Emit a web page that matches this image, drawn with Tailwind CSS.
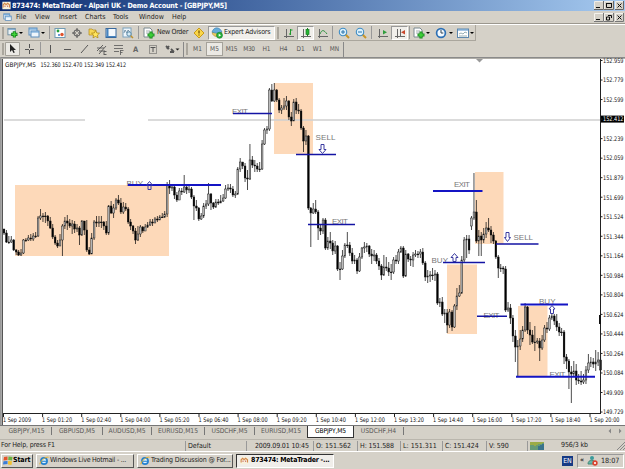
<!DOCTYPE html>
<html lang="en">
<head>
    <meta charset="UTF-8">
    <meta name="viewport" content="width=device-width, initial-scale=1.0">
    <title>873474: MetaTrader - Alpari UK - Demo Account - [GBPJPY,M5]</title>
    <script src="https://cdn.jsdelivr.net/npm/@tailwindcss/browser@4"></script>
</head>
<body class="w-[625px] h-[469px] overflow-hidden bg-[#d5d1c8] font-['DejaVu_Sans_Condensed','DejaVu_Sans',sans-serif] text-[7px] leading-none text-[#222] flex flex-col whitespace-nowrap">

    <!-- Icon set -->
    <svg class="hidden">
        <symbol id="newchart" viewBox="0 0 12 12"><rect x="1" y="1" width="8" height="7" fill="#e8f0f4" stroke="#6c8ca0"/><path d="M1 2h8" stroke="#6c9cc8"/><path d="M8 4v7M4.500 7.500h7" stroke="#1c8a20" stroke-width="3.400"/><path d="M8 5v5M5.500 7.500h5" stroke="#3fd53a" stroke-width="1.500"/></symbol>
        <symbol id="windows" viewBox="0 0 12 12"><rect x="1" y="1" width="8" height="7" fill="#dceaf6" stroke="#5d8dbb"/><rect x="3" y="4" width="8" height="6" fill="#eef5fb" stroke="#5d8dbb"/><path d="M1 2h8M3 5h8" stroke="#5d9bd3"/></symbol>
        <symbol id="market" viewBox="0 0 12 12"><rect x="1" y="1.500" width="10" height="9" fill="#fff" stroke="#719bb4"/><circle cx="4" cy="4" r="1.400" fill="#22a03a"/><circle cx="5" cy="8" r="1" fill="#3a78c8"/><circle cx="8" cy="7.500" r="1.700" fill="#e0522c"/></symbol>
        <symbol id="target" viewBox="0 0 12 12"><circle cx="6" cy="6" r="3.200" fill="none" stroke="#555"/><path d="M6 1v4M6 7v4M1 6h4M7 6h4" stroke="#555"/></symbol>
        <symbol id="navigator" viewBox="0 0 12 12"><path d="M1 2h3l1 1h3v5H1z" fill="#f7d654" stroke="#b28a1c" stroke-width=".7"/><path d="M7.500 3.500l1.200 2.400 2.800.3-2 1.800.5 2.800-2.500-1.300L5 10.800l.5-2.800-2-1.800 2.800-.3z" fill="#ffe45c" stroke="#b08a18" stroke-width=".8"/></symbol>
        <symbol id="terminal" viewBox="0 0 12 12"><rect x="1" y="1.500" width="10" height="9" fill="#f4f8fc" stroke="#39699e"/><path d="M2.500 2v8" stroke="#4684bf" stroke-width="2"/><path d="M1 9.500h10" stroke="#4684bf"/></symbol>
        <symbol id="tester" viewBox="0 0 12 12"><rect x="1" y="1" width="8" height="9" fill="#edf5fb" stroke="#7ba2bd"/><path d="M2 6l1-3 2 3 1-3 2 2" fill="none" stroke="#537991" stroke-width=".7"/><circle cx="7" cy="7" r="2.200" fill="#d5ecf7" stroke="#5686a4"/><path d="M8.700 8.700L11 11" stroke="#c09230" stroke-width="1.500"/></symbol>
        <symbol id="order" viewBox="0 0 12 12"><path d="M1 1h6l2 2v7H1z" fill="#fff" stroke="#7b8a91"/><path d="M3 4h4M3 6h3" stroke="#8b98a0" stroke-width=".8"/><path d="M8 4.500v7M4.500 8h7" stroke="#1c8a20" stroke-width="3.200"/><path d="M8 5.500v5M5.500 8h5" stroke="#3fd53a" stroke-width="1.400"/></symbol>
        <symbol id="warn" viewBox="0 0 12 12"><path d="M6 1l5 5-5 5-5-5z" fill="#fbd648" stroke="#c79a1a"/><path d="M6 3.500v3M6 7.500v1" stroke="#6a4a00" stroke-width="1.200"/></symbol>
        <symbol id="expert" viewBox="0 0 12 12"><path d="M1 5.500c1 5 8 6 10 0z" fill="#f0c95a" stroke="#a98c3a" stroke-width=".6"/><path d="M1 5c2-6 8-5 10 0-3 1.500-7 1.500-10 0z" fill="#67acd9" stroke="#3d7fae" stroke-width=".6"/><circle cx="8.500" cy="8.300" r="3" fill="#27b13a" stroke="#14802a" stroke-width=".6"/><path d="M7.700 6.800l2.400 1.500-2.400 1.500z" fill="#fff"/></symbol>
        <symbol id="bars" viewBox="0 0 12 12"><path d="M3.500 2v9M1 9.500h10" stroke="#666"/><path d="M7.500 2v6M7.500 3h2M6 7h1.500" stroke="#1f9a2c"/></symbol>
        <symbol id="candles" viewBox="0 0 12 12"><path d="M3.500 2v9M1 9.500h10" stroke="#666"/><path d="M7.500 1v8" stroke="#1b7b24"/><rect x="6" y="2.500" width="3" height="5" fill="#25b534" stroke="#1b7b24" stroke-width=".7"/></symbol>
        <symbol id="line" viewBox="0 0 12 12"><path d="M2.500 2v9M1 9.500h10" stroke="#666"/><path d="M3 7c2-5 4-4 7 0" fill="none" stroke="#2f9340"/></symbol>
        <symbol id="zoomin" viewBox="0 0 12 12"><path d="M7.500 7.500L11 11" stroke="#c99527" stroke-width="2"/><circle cx="5" cy="5" r="3.700" fill="#dcf1fc" stroke="#3d8cc5" stroke-width="1.100"/><path d="M3 5h4M5 3v4" stroke="#2b75ad"/></symbol>
        <symbol id="zoomout" viewBox="0 0 12 12"><path d="M7.500 7.500L11 11" stroke="#c99527" stroke-width="2"/><circle cx="5" cy="5" r="3.700" fill="#dcf1fc" stroke="#3d8cc5" stroke-width="1.100"/><path d="M3 5h4" stroke="#2b75ad"/></symbol>
        <symbol id="scroll" viewBox="0 0 12 12"><path d="M2.500 2v9M1 9.500h10" stroke="#666"/><path d="M6 3l4 2.300L6 7.600z" fill="#2f9d3c"/></symbol>
        <symbol id="shift" viewBox="0 0 12 12"><path d="M3.500 2v9M1 9.500h10M6.500 2v7" stroke="#666"/><path d="M11 3v4.600L7 5.300z" fill="#c9472c"/></symbol>
        <symbol id="clock" viewBox="0 0 12 12"><circle cx="6" cy="6" r="4.400" fill="#f4faff" stroke="#2d70b5" stroke-width="1.700"/><path d="M6 3v3h2.300" fill="none" stroke="#345"/></symbol>
        <symbol id="template" viewBox="0 0 12 12"><rect x=".5" y="2" width="11" height="8.500" fill="#fff" stroke="#5d87ad"/><path d="M1 3h10" stroke="#4f8ecb"/><path d="M2 7l2-1 2 1 2-2 2 1M2 9h8" fill="none" stroke="#6c8c96" stroke-width=".7"/></symbol>
        <symbol id="app" viewBox="0 0 12 12"><rect x=".5" y="1" width="11" height="10" fill="#f8f1dc"/><path d="M1.500 8.500V5l2-2 2 2 2-2 2.500 2v3.500" fill="none" stroke="#d3884a" stroke-width="1.500"/><path d="M4 8V6M7.500 8V6" stroke="#b44"/></symbol>
        <symbol id="ie" viewBox="0 0 12 12"><circle cx="6" cy="6" r="3.700" fill="#dff2ff" stroke="#2682cf" stroke-width="2"/><path d="M3 6.300h7" stroke="#2682cf" stroke-width="1.300"/><path d="M1 10C1 6 8 .5 11.500 1.500" fill="none" stroke="#e8b22c" stroke-width="1.200"/></symbol>
    </svg>

    <!-- Title bar -->
    <header class="h-[11px] shrink-0 flex items-center pl-[2px] pr-px bg-linear-to-r from-[#0c2a70] to-[#a6caf0] text-white font-bold">
        <svg class="w-[9px] h-[9px]"><use href="#app"/></svg>
        <span class="ml-px text-[7.2px] tracking-[-0.2px]">873474: MetaTrader - Alpari UK - Demo Account - [GBPJPY,M5]</span>
        <div class="ml-auto flex">
            <svg class="w-[30px] h-[9px]" viewBox="0 0 30 9"><path d="M.5.500h9v8h-9zM10.500.500h9v8h-9zM21.500.500h8v8h-8z" fill="#d5d1c8" stroke="#efede8"/><path d="M0 8.500h9.500V0M10 8.500h9.500V0M21 8.500h8.500V0" fill="none" stroke="#666"/><path d="M2 6.500h4" stroke="#111"/><path d="M12.500 2v4.500h5V2M12 2.500h6M23.500 2.500l4 4M27.500 2.500l-4 4" fill="none" stroke="#111"/></svg>
        </div>
    </header>

    <!-- Menu -->
    <nav class="h-[13px] shrink-0 flex items-center pl-[3px] pr-px pt-px border-b border-[#9b978e]">
        <svg class="w-[9px] h-[9px]"><use href="#windows"/></svg>
        <span class="ml-[4px] w-[19px]">File</span>
        <span class="w-[24px]">View</span>
        <span class="w-[26px]">Insert</span>
        <span class="w-[28px]">Charts</span>
        <span class="w-[26px]">Tools</span>
        <span class="w-[33px]">Window</span>
        <span>Help</span>
        <svg class="ml-auto w-[30px] h-[9px]" viewBox="0 0 30 9"><path d="M.5.500h9v8h-9zM10.500.500h9v8h-9zM21.500.500h8v8h-8z" fill="#d5d1c8" stroke="#f5f3ee"/><path d="M0 8.500h9.500V0M10 8.500h9.500V0M21 8.500h8.500V0" fill="none" stroke="#777"/><path d="M2 6.500h4" stroke="#111"/><path d="M12.500 4v3h3V4zM14 2.500h3.500V5M23.500 2.500l4 4M27.500 2.500l-4 4" fill="none" stroke="#111"/></svg>
    </nav>

    <!-- Standard toolbar -->
    <div class="h-[17px] shrink-0 flex items-center border-t border-t-white">
        <div class="flex items-center h-full w-[476px] border-r border-b border-[#aaa69d]">
            <i class="w-[2px] h-[12px] ml-[2px] mr-px bg-[#aaa69d]"></i>
            <div class="w-[19px] flex items-center pl-[2px]"><svg class="w-[11px] h-[12px]"><use href="#newchart"/></svg><i class="ml-px border-x-2 border-t-2 border-x-transparent border-t-black"></i></div>
            <div class="w-[22px] flex items-center pl-[4px]"><svg class="w-[12px] h-[12px]"><use href="#windows"/></svg><i class="ml-px border-x-2 border-t-2 border-x-transparent border-t-black"></i></div>
            <i class="w-px h-[13px] ml-[3px] mr-[2px] bg-[#999]"></i>
            <svg class="w-[12px] h-[12px] mx-[2px]"><use href="#market"/></svg>
            <svg class="w-[12px] h-[12px] ml-[3px] mr-[2px]"><use href="#target"/></svg>
            <svg class="w-[12px] h-[12px] ml-[3px] mr-[2px]"><use href="#navigator"/></svg>
            <svg class="w-[12px] h-[12px] ml-[3px] mr-[2px]"><use href="#terminal"/></svg>
            <svg class="w-[12px] h-[12px] ml-[3px] mr-[2px]"><use href="#tester"/></svg>
            <i class="w-px h-[13px] mx-[2px] bg-[#999]"></i>
            <div class="w-[49px] flex items-center pl-[2px]"><svg class="w-[12px] h-[12px] shrink-0"><use href="#order"/></svg><span class="ml-[2px] tracking-[-0.3px]">New Order</span></div>
            <svg class="w-[12px] h-[12px] mx-[3px]"><use href="#warn"/></svg>
            <div class="w-[67px] h-[14px] flex items-center pl-[2px] bg-[#f1efeb] border border-[#999] border-r-white border-b-white"><svg class="w-[12px] h-[12px] shrink-0"><use href="#expert"/></svg><span class="ml-[1px] tracking-[-0.2px]">Expert Advisors</span></div>
            <i class="w-[2px] h-[12px] ml-[2px] mr-px bg-[#aaa69d]"></i>
            <svg class="w-[12px] h-[12px] ml-[3px] mr-[2px]"><use href="#bars"/></svg>
            <div class="w-[17px] h-[14px] flex items-center justify-center bg-[#f1efeb] border border-[#999] border-r-white border-b-white"><svg class="w-[12px] h-[12px]"><use href="#candles"/></svg></div>
            <svg class="w-[12px] h-[12px] ml-[3px] mr-[2px]"><use href="#line"/></svg>
            <i class="w-px h-[13px] ml-px mr-[2px] bg-[#999]"></i>
            <svg class="w-[12px] h-[12px] ml-[3px] mr-[2px]"><use href="#zoomin"/></svg>
            <svg class="w-[12px] h-[12px] ml-[3px] mr-[2px]"><use href="#zoomout"/></svg>
            <i class="w-px h-[13px] mx-[2px] bg-[#999]"></i>
            <svg class="w-[12px] h-[12px] ml-[3px] mr-[2px]"><use href="#scroll"/></svg>
            <div class="w-[17px] h-[14px] flex items-center justify-center bg-[#f1efeb] border border-[#999] border-r-white border-b-white"><svg class="w-[12px] h-[12px]"><use href="#shift"/></svg></div>
            <i class="w-px h-[13px] ml-px mr-[2px] bg-[#999]"></i>
            <div class="w-[20px] flex items-center pl-px"><svg class="w-[12px] h-[12px]"><use href="#order"/></svg><i class="ml-px border-x-2 border-t-2 border-x-transparent border-t-black"></i></div>
            <div class="w-[23px] flex items-center pl-[3px]"><svg class="w-[12px] h-[12px]"><use href="#clock"/></svg><i class="ml-[2px] border-x-2 border-t-2 border-x-transparent border-t-black"></i></div>
            <div class="flex items-center pl-[2px]"><svg class="w-[12px] h-[12px]"><use href="#template"/></svg><i class="ml-px border-x-2 border-t-2 border-x-transparent border-t-black"></i></div>
        </div>
    </div>

    <!-- Line studies and periods -->
    <div class="h-[16px] shrink-0 flex items-center text-[6.5px] text-[#555]">
        <div class="flex items-center h-[15px] w-[184px] border-r border-[#888]">
            <i class="w-[2px] h-[12px] ml-[2px] mr-px bg-[#aaa69d]"></i>
            <svg class="w-[178px] h-[15px]" viewBox="5 42 178 15" fill="none" stroke="#555">
                <path d="M5.500 42.500h14v13h-14z" fill="#ebe9e4" stroke="#a5a29a"/>
                <path d="M10 44v8l2-2 1.500 3 1.300-.6L13.500 50H16z" fill="#222" stroke="none"/>
                <path d="M29.500 44v4M29.500 50v4M25 49.500h4M30 49.500h4"/>
                <path d="M40.500 42v13" stroke="#999"/>
                <path d="M50.500 45v8M64 49.500h7M81 53l7-8"/>
                <path d="M97 51l6-6M99 54l7-8M97 48h7M99 51h6M104 51v4M104 51.500h2.500M104 54.500h2.500" stroke-width=".9"/>
                <path d="M114 45.500h9M114 48.500h9M114 51.500h5M120.500 50v5M120.500 50.500h3M120.500 52.500h2" stroke-width=".8"/>
                <text x="133" y="52" font-size="7.500" font-weight="bold" fill="#666" stroke="none">A</text>
                <path d="M149.500 45.500h7v8h-7z" stroke-dasharray="1 1"/><path d="M150.500 47.500h5M153 47v5"/>
                <path d="M166 46l3 3M171 49l3 3M167 49l2-3M170 52h4" stroke-width="1.800"/><path d="M175.500 48.500h4l-2 2z" fill="#222" stroke="none"/>
            </svg>
        </div>
        <i class="w-[2px] h-[12px] ml-[2px] mr-px bg-[#aaa69d]"></i>
        <div class="flex items-center text-center h-[15px] w-[155px] border-r border-[#888]">
            <span class="w-[17px]">M1</span>
            <span class="w-[17px] h-[14px] leading-[13px] bg-[#ebe9e4] border border-[#a5a29a]">M5</span>
            <span class="w-[17px] tracking-[-0.3px]">M15</span>
            <span class="w-[18px] tracking-[-0.3px]">M30</span>
            <span class="w-[17px]">H1</span>
            <span class="w-[17px]">H4</span>
            <span class="w-[17px]">D1</span>
            <span class="w-[17px]">W1</span>
            <span class="w-[17px]">MN</span>
        </div>
    </div>

    <!-- Chart -->
    <svg id="chart" class="w-[625px] h-[368px] shrink-0 block" viewBox="0 57 625 368">
        <rect x="0" y="57" width="625" height="368" fill="#fff"/>
        <rect x="0" y="57" width="625" height="1" fill="#8a8a8a"/>
        <rect x="0" y="58" width="625" height="1" fill="#b0aea8"/>
        <rect x="0" y="57" width="1" height="368" fill="#999"/>
        <rect x="1.500" y="59" width="1.500" height="366" fill="#555"/>
        <path d="M476 59h7l-3.500 3.500z" fill="#999"/>
        <g fill="#fdd9b9">
            <rect x="15" y="185" width="154" height="71"/>
            <rect x="274" y="83" width="39" height="71"/>
            <rect x="447" y="264.500" width="30" height="69.500"/>
            <rect x="475" y="172" width="28.500" height="72"/>
            <rect x="518" y="306" width="29.500" height="70"/>
        </g>
        <path d="M4 120h81M148 120h452" stroke="#d0d0d0" stroke-width="1.400"/>
        <g id="candles-layer" stroke="#111"></g>
        <g font-family="Liberation Sans, sans-serif" font-size="8" fill="#777" lengthAdjust="spacingAndGlyphs">
            <text x="126.500" y="185.500" textLength="16.500">BUY</text>
            <text x="232" y="113.800" textLength="16">EXIT</text>
            <text x="315.500" y="139.700" textLength="20">SELL</text>
            <text x="332" y="224" textLength="16">EXIT</text>
            <text x="454" y="187" textLength="16">EXIT</text>
            <text x="513.500" y="240" textLength="19.500">SELL</text>
            <text x="431.500" y="263" textLength="16.500">BUY</text>
            <text x="483.500" y="318.200" textLength="16">EXIT</text>
            <text x="539" y="304" textLength="16.500">BUY</text>
            <text x="549.500" y="376.500" textLength="16">EXIT</text>
        </g>
        <path d="M128 185h93M433 191h49.500M520.500 304.500h47.500M516 376.700h79" stroke="#1414c4" stroke-width="1.900"/>
        <path d="M233 113.500h39M296 154.500h40M308 224.500h47M443 262.500h42M496 244h42.500M477 316.300h30" stroke="#1414a4" stroke-width="1.500"/>
        <g fill="none" stroke="#3a3aa0">
            <path d="M149.500 181.500l-3 3.500h1.500v4.500h3V185h1.500z"/>
            <path d="M454.500 253.500l-3.500 4h2v4h3v-4h2z"/>
            <path d="M552 305.500l-3 3.500h1.500v4.500h3V309h1.500z"/>
            <path d="M322.500 153.500l-3.500-4h2v-5h3v5h2z"/>
            <path d="M507.500 241.500l-3-4h1.500v-5h3v5h1.500z"/>
        </g>
        <path d="M600.500 59v354.500M3 413.500h598" fill="none" stroke="#222"/>
        <rect x="599" y="315" width="2" height="9" fill="#111"/>
        <text x="5" y="67" font-size="6.300" textLength="31" lengthAdjust="spacingAndGlyphs" fill="#111">GBPJPY,M5</text>
        <text x="40.500" y="67" font-size="6.300" textLength="85.500" lengthAdjust="spacingAndGlyphs" fill="#111">152.360 152.470 152.349 152.412</text>
        <g id="axes" font-size="6.300" fill="#111"></g>
    </svg>

    <!-- Chart tabs -->
    <div class="h-[14px] shrink-0 flex items-start border-t border-[#777] text-[6.7px] text-[#555] pl-[2px]">
        <span class="w-[50px] text-center border-r border-[#777] h-[8px] mt-px leading-[9px]">GBPJPY,M15</span>
        <span class="w-[51px] text-center border-r border-[#777] h-[8px] mt-px leading-[9px]">GBPUSD,M5</span>
        <span class="w-[49px] text-center border-r border-[#777] h-[8px] mt-px leading-[9px]">AUDUSD,M5</span>
        <span class="w-[53px] text-center border-r border-[#777] h-[8px] mt-px leading-[9px]">EURUSD,M15</span>
        <span class="w-[50px] text-center border-r border-[#777] h-[8px] mt-px leading-[9px]">USDCHF,M5</span>
        <span class="w-[52px] text-center h-[8px] mt-px leading-[9px]">EURUSD,M15</span>
        <span class="w-[47px] text-center bg-white text-black border border-t-0 border-[#333] h-[12px] leading-[11px] tracking-[-0.15px]">GBPJPY,M5</span>
        <span class="w-[50px] text-center border-r border-[#777] h-[8px] mt-px leading-[9px]">USDCHF,H4</span>
        <svg class="ml-auto mr-[3px] mt-[2px] w-[14px] h-[6px]" viewBox="0 0 14 6"><path d="M3 .5L.5 3 3 5.500zM11 .5L13.500 3 11 5.500z" fill="#888"/></svg>
    </div>

    <!-- Status bar -->
    <div class="h-[12px] shrink-0 flex items-center border-t border-[#bab6ad] text-[7px]">
        <span class="w-[185px] pl-px tracking-[-0.15px]">For Help, press F1</span>
        <span class="w-[61px] pl-[2px] border-l border-[#999] h-[10px] leading-[10px]">Default</span>
        <span class="w-[67px] pl-[8px] h-[10px] leading-[10px] tracking-[-0.15px] border-l border-[#999]">2009.09.01 10:45</span>
        <span class="w-[44px] pl-[2px] border-l border-[#999] h-[10px] leading-[10px]">O: 151.562</span>
        <span class="w-[43px] pl-[2px] border-l border-[#999] h-[10px] leading-[10px] tracking-[-0.1px]">H: 151.588</span>
        <span class="w-[42px] pl-[2px] border-l border-[#999] h-[10px] leading-[10px]">L: 151.311</span>
        <span class="w-[44px] pl-[2px] border-l border-[#999] h-[10px] leading-[10px] tracking-[-0.1px]">C: 151.424</span>
        <span class="w-[41px] pl-[2px] border-l border-[#999] h-[10px] leading-[10px]">V: 590</span>
        <div class="flex-1 flex items-center border-l border-[#999] h-[10px]">
            <svg class="ml-[2px] w-[15px] h-[8px]" viewBox="0 0 15 8"><path d="M1 0v8M3 0v8M5 0v8M7 0v8M9 0v8M11 0v8M13 0v8" stroke="#2b7d4a" stroke-width="1.300"/><path d="M1 0v3M3 0v3M5 0v4M7 0v3M9 0v2M11 0v2M13 0v1" stroke="#b8b52d" stroke-width="1.300"/><path d="M9 4v4M11 3v5M13 2v6" stroke="#235e98" stroke-width="1.300"/></svg>
            <span class="ml-[16px] tracking-[-0.1px]">956/3 kb</span>
            <svg class="ml-auto w-[9px] h-[9px]" viewBox="0 0 9 9"><path d="M1 9l8-8M4 9l5-5M7 9l2-2" stroke="#888"/></svg>
        </div>
    </div>

    <!-- Taskbar -->
    <footer class="flex-1 flex items-center gap-[3px] border-t border-white px-px">
        <div class="w-[32px] h-[14px] flex items-center border border-white border-r-[#555] border-b-[#555] font-bold text-black">
            <svg class="ml-px w-[10px] h-[9px]" viewBox="0 0 10 9"><path d="M1 1l3.500-.5V4L.500 4.500z" fill="#e4562b"/><path d="M5.500.500L9.500 1 9 4.500 5.200 4z" fill="#6db33f"/><path d="M.5 5.300l4-.4V8L0 8.500z" fill="#3b7dd8"/><path d="M5.200 5l3.800.3L8.500 9 5 8.400z" fill="#f2c12e"/></svg>
            <span class="tracking-[-0.1px]">Start</span>
        </div>
        <div class="w-[98px] h-[14px] flex items-center border border-white border-r-[#555] border-b-[#555]">
            <svg class="ml-[2px] mr-px w-[10px] h-[10px]"><use href="#ie"/></svg>
            <span class="tracking-[-0.22px]">Windows Live Hotmail - ...</span>
        </div>
        <div class="w-[96px] h-[14px] flex items-center border border-white border-r-[#555] border-b-[#555]">
            <svg class="ml-[2px] mr-px w-[10px] h-[10px]"><use href="#ie"/></svg>
            <span class="tracking-[-0.16px]">Trading Discussion @ For...</span>
        </div>
        <div class="w-[98px] h-[14px] flex items-center bg-[#f0eeea] border border-[#333] border-r-white border-b-white font-bold text-black">
            <svg class="ml-[3px] mr-[2px] w-[9px] h-[9px] shrink-0"><use href="#app"/></svg>
            <span class="tracking-[-0.22px]">873474: MetaTrader -...</span>
        </div>
        <span class="ml-auto w-[11px] h-[10px] leading-[10px] text-center text-white bg-[#163a84]">EN</span>
        <div class="ml-[1px] w-[47px] h-[14px] flex items-center border border-[#999] border-r-white border-b-white">
            <span class="ml-[2px] font-bold">«</span>
            <svg class="ml-[3px] w-[11px] h-[11px]" viewBox="0 0 11 11"><circle cx="5" cy="3" r="2" fill="#3a9b9b"/><path d="M1 9c0-5 7-5 8 0z" fill="#61b5a9" stroke="#487"/><circle cx="8" cy="8" r="2.700" fill="#d9432f"/><path d="M7 7l2 2M9 7L7 9" stroke="#fff" stroke-width=".8"/></svg>
            <span class="ml-[3px] text-[7.2px] tracking-[-0.1px]">18:07</span>
        </div>
    </footer>

<script>
    // close, high, low of each bar in chart coordinates; a bar opens at the previous close
    const bars = `233 229 235,242 230 243,242 236 244,240 236 243,250 239 251,252 249 255,255 250 256,253 249 256,240 239 254,240 238 242,
        238 235 241,239 234 241,236 233 241,236 232 238,218 216 237,216 209 220,216 213 222,216 212 223,221 215 226,228 217 229,
        237 224 239,243 235 245,246 240 248,240 234 246,226 224 256,221 217 229,223 215 230,226 219 228,224 220 234,229 221 233,
        228 224 232,235 226 245,221 220 236,230 221 235,250 220 252,254 247 255,238 233 254,222 220 240,223 216 227,222 216 227,
        222 216 228,226 221 230,233 221 235,206 205 235,213 201 214,208 204 218,200 198 210,203 195 205,212 198 214,207 202 214,
        209 203 211,222 207 224,226 219 230,231 225 234,240 228 244,234 226 241,227 225 237,231 226 233,227 224 229,225 222 228,
        222 219 226,223 219 226,219 217 222,220 216 222,217 215 220,217 213 218,214 211 218,185 182 217,188 180 194,187 185 191,
        195 184 199,200 192 202,191 188 197,192 188 195,187 175 193,190 184 194,189 185 193,197 187 199,206 195 220,208 200 211,
        219 207 221,216 213 220,206 203 218,204 200 209,194 183 206,203 193 210,207 202 209,202 199 208,203 199 205,201 195 203,
        198 194 202,189 185 199,188 184 191,189 184 193,195 186 197,194 191 198,169 167 195,162 158 172,166 162 169,178 163 182,
        179 170 190,160 144 180,165 156 168,166 160 172,169 163 172,169 162 172,144 140 170,130 128 145,129 126 134,90 88 131,
        101 84 102,90 83 102,100 89 102,110 98 113,108 105 114,106 98 110,101 96 110,117 100 120,121 112 126,102 99 121,
        110 98 114,111 104 114,128 109 130,141 126 152,136 130 145,208 135 210,213 207 247,209 203 214,212 200 214,228 210 240,
        231 225 235,220 218 234,248 218 250,241 237 250,243 232 249,251 240 255,246 241 254,269 245 271,269 262 280,256 250 270,
        245 243 258,245 232 248,253 242 256,261 248 264,260 255 264,271 258 274,257 253 272,248 247 259,247 242 253,246 243 252,
        254 245 257,256 249 264,255 250 261,261 253 264,266 258 270,275 264 280,267 255 276,268 257 271,272 262 276,272 264 280,
        260 257 274,261 255 264,252 249 264,248 246 253,276 246 278,254 250 277,259 253 262,260 256 266,255 252 267,254 250 257,
        254 251 258,252 249 258,263 248 265,277 261 281,276 270 283,275 271 282,275 268 280,274 270 281,303 272 305,302 298 307,
        314 297 316,313 309 323,325 309 333,312 309 328,327 310 331,306 304 328,296 288 310,293 285 297,260 256 294,240 237 262,
        239 235 258,250 235 254,218 216 230,212 173 220,241 200 243,236 230 256,240 232 256,234 228 243,228 222 238,230 218 232,
        235 226 243,241 232 244,257 240 259,268 255 278,268 264 272,269 266 274,310 266 312,308 302 312,318 304 324,336 315 342,
        347 330 362,346 340 376,339 330 350,330 326 342,307 303 332,330 306 334,335 322 345,342 330 344,342 326 351,341 338 344,
        348 338 361,340 335 350,328 325 342,329 322 333,318 315 331,316 313 320,321 314 325,327 314 331,332 323 336,332 328 336,
        357 330 364,361 354 369,372 359 389,374 366 403,371 361 376,380 364 385,381 374 384,382 371 385,380 374 384,370 366 384,
        363 354 373,362 357 367,364 358 368,362 350 371,360 352 366,370 354 372`.split(',').map(b => b.trim().split(' ').map(Number));

    let open = 229;
    let candles = '';
    bars.forEach(([close, high, low], i) => {
        const x = 4 + i * 2.435;
        // skip the gap up at the spike
        if (i === 192) open = 226;
        const top = Math.min(open, close);
        const height = Math.max(Math.abs(open - close), 0.8);
        candles += `<path d="M${x} ${high}V${low}" stroke-width=".75"/>`;
        candles += `<rect x="${x - 0.85}" y="${top}" width="1.7" height="${height}" stroke-width=".45" fill="${close < open ? '#bbb' : '#000'}"/>`;
        open = close;
    });
    document.getElementById('candles-layer').innerHTML = candles;

    const prices = ['152.959', '152.779', '152.599', '152.412', '152.239', '152.059', '151.879', '151.699', '151.524', '151.344',
        '151.164', '150.984', '150.804', '150.624', '150.444', '150.264', '150.084', '149.909', '149.729'];
    const times = ['1 Sep 2009', '1 Sep 01:20', '1 Sep 02:40', '1 Sep 04:00', '1 Sep 05:20', '1 Sep 06:40', '1 Sep 08:00', '1 Sep 09:20',
        '1 Sep 10:40', '1 Sep 12:00', '1 Sep 13:20', '1 Sep 14:40', '1 Sep 16:00', '1 Sep 17:20', '1 Sep 18:40', '1 Sep 20:00'];
    let axes = '';
    prices.forEach((price, i) => {
        const y = 60.500 + i * 19.53;
        const current = price === '152.412';
        if (current) axes += `<rect x="601" y="${y - 3.5}" width="23" height="7" fill="#000"/>`;
        axes += `<path d="M600 ${y}h2.500" stroke="#222"/>`;
        axes += `<text x="603" y="${y + 2.3}" textLength="20.500" lengthAdjust="spacingAndGlyphs" fill="${current ? '#fff' : '#111'}">${price}</text>`;
    });
    times.forEach((time, i) => {
        const x = 3 + i * 39.1;
        axes += `<path d="M${x + 0.5} 414v3" stroke="#222"/>`;
        axes += `<text x="${x}" y="422" textLength="${i ? 30 : 28}" lengthAdjust="spacingAndGlyphs">${time}</text>`;
    });
    document.getElementById('axes').innerHTML = axes;
</script>
</body>
</html>
